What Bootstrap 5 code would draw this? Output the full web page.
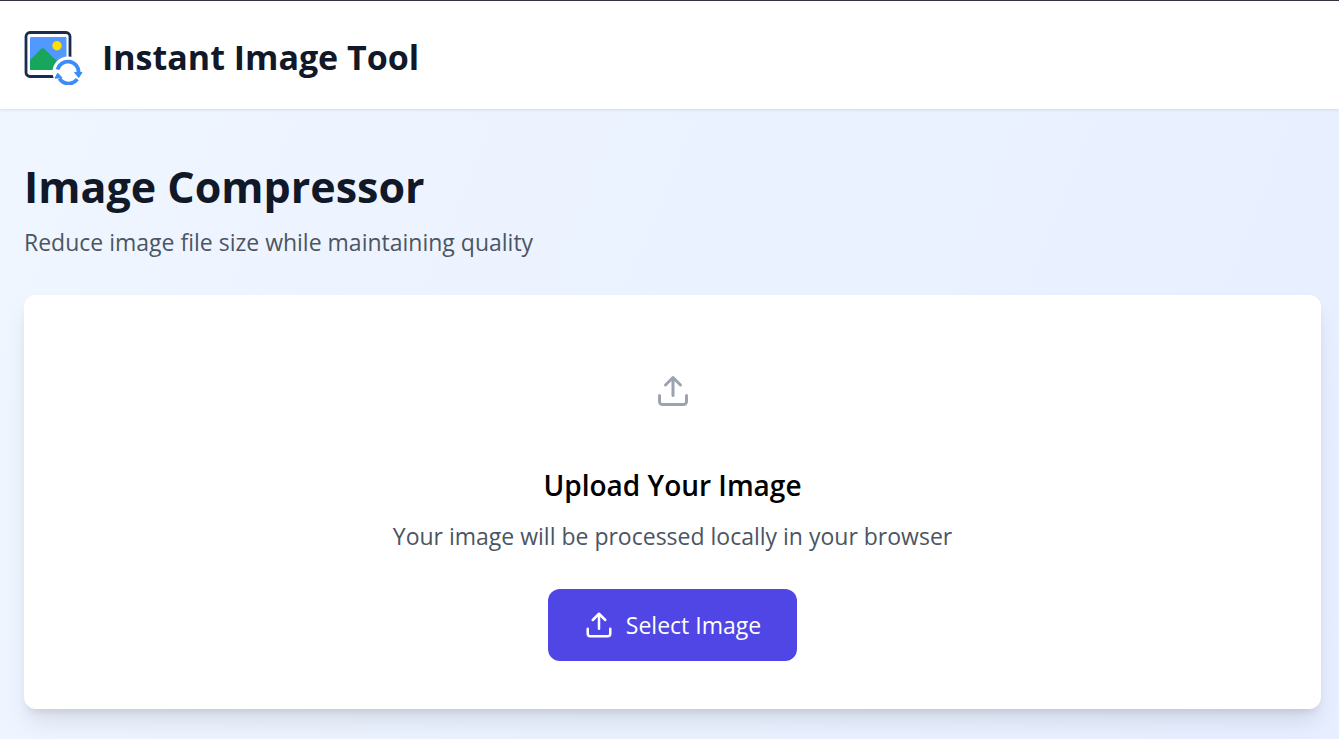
<!DOCTYPE html>
<html lang="en">
<head>
<meta charset="utf-8">
<meta name="viewport" content="width=device-width, initial-scale=1">
<title>Instant Image Tool</title>
<link href="https://cdn.jsdelivr.net/npm/bootstrap@5.3.0/dist/css/bootstrap.min.css" rel="stylesheet">
<style>
  body { font-family: "Segoe UI", "Open Sans", "Noto Sans", sans-serif; font-size: 23px; line-height: 36px; color: #4b5563; background: #fff; }
  .site-header { border-top: 1px solid #343440; padding: 26px 24px 22px; box-shadow: 0 1px 3px rgba(0,0,0,.1); position: relative; }
  .site-logo { margin-top: -4px; }
  .site-title { font-size: 34px; line-height: 60px; font-weight: 700; color: #111827; }
  .page-main { background: linear-gradient(112deg, #eff6ff, #e7eeff); padding: 48px 18px 30px 24px; }
  .page-title { font-size: 43px; line-height: 60px; font-weight: 700; color: #111827; margin-bottom: 7px; }
  .page-lead { margin-bottom: 35px; }
  .upload-card { border: 0; border-radius: 12px; padding: 78px 48px 48px; box-shadow: 0 15px 23px -4px rgba(0,0,0,.1), 0 6px 9px -4px rgba(0,0,0,.1); }
  .upload-title { font-size: 28px; line-height: 42px; font-weight: 600; color: #000; margin-bottom: 12px; }
  .upload-note { margin-bottom: 35px; }
  .stroke-icon { fill: none; stroke: currentColor; stroke-width: 2; stroke-linecap: round; stroke-linejoin: round; }
  .upload-icon { color: #9ca3af; margin-bottom: 55px; }
  .btn-select { --bs-btn-bg: #4f46e5; --bs-btn-color: #fff; --bs-btn-hover-bg: #4338ca; --bs-btn-hover-color: #fff; font-size: 23px; line-height: 36px; padding: 17px 35px; border-radius: 12px; gap: 12px; }
</style>
</head>
<body class="d-flex flex-column min-vh-100">
<header class="site-header">
  <a href="#" class="d-flex align-items-center text-decoration-none">
    <svg class="site-logo me-3" width="62" height="60" viewBox="0 0 62 60" aria-hidden="true">
      <rect x="2" y="7.500" width="44" height="44" rx="4" fill="#fff" stroke="#1a2c50" stroke-width="2.800"/>
      <rect x="6" y="12" width="36.500" height="33" rx="1" fill="#5199ff"/>
      <path d="M6 35L17.500 23.500q1.200-1 2.400 0L33 36v9H7q-1 0-1-1z" fill="#18a65c"/>
      <circle cx="33" cy="20.700" r="4.700" fill="#ffde00"/>
      <circle cx="44" cy="47" r="15.500" fill="#fff"/>
      <g fill="none" stroke="#3b8bf9" stroke-width="3.800">
        <path d="M33.500 44.500A10.800 10.800 0 0 1 54.700 47.500M35.500 53.500A10.800 10.800 0 0 0 53.300 54.200"/>
      </g>
      <path d="M50.500 47.500h7.500l-3.300 5zM31 53.200l2.700-5 4.300 4.500z" fill="#3b8bf9" stroke="#3b8bf9" stroke-linejoin="round"/>
    </svg>
    <span class="site-title">Instant Image Tool</span>
  </a>
</header>
<main class="page-main flex-grow-1">
  <h1 class="page-title">Image Compressor</h1>
  <p class="page-lead">Reduce image file size while maintaining quality</p>
  <section class="card upload-card text-center align-items-center">
    <svg class="stroke-icon upload-icon" width="36" height="36" viewBox="0 0 24 24" aria-hidden="true">
      <path d="M21 15v4a2 2 0 0 1-2 2H5a2 2 0 0 1-2-2v-4M17 8l-5-5-5 5M12 3v12"/>
    </svg>
    <h2 class="upload-title">Upload Your Image</h2>
    <p class="upload-note">Your image will be processed locally in your browser</p>
    <button type="button" class="btn btn-select d-flex align-items-center">
      <svg class="stroke-icon" width="30" height="30" viewBox="0 0 24 24" aria-hidden="true">
        <path d="M21 15v4a2 2 0 0 1-2 2H5a2 2 0 0 1-2-2v-4M17 8l-5-5-5 5M12 3v12"/>
      </svg>
      Select Image
    </button>
  </section>
</main>
<script src="https://cdn.jsdelivr.net/npm/bootstrap@5.3.0/dist/js/bootstrap.bundle.min.js"></script>
</body>
</html>
